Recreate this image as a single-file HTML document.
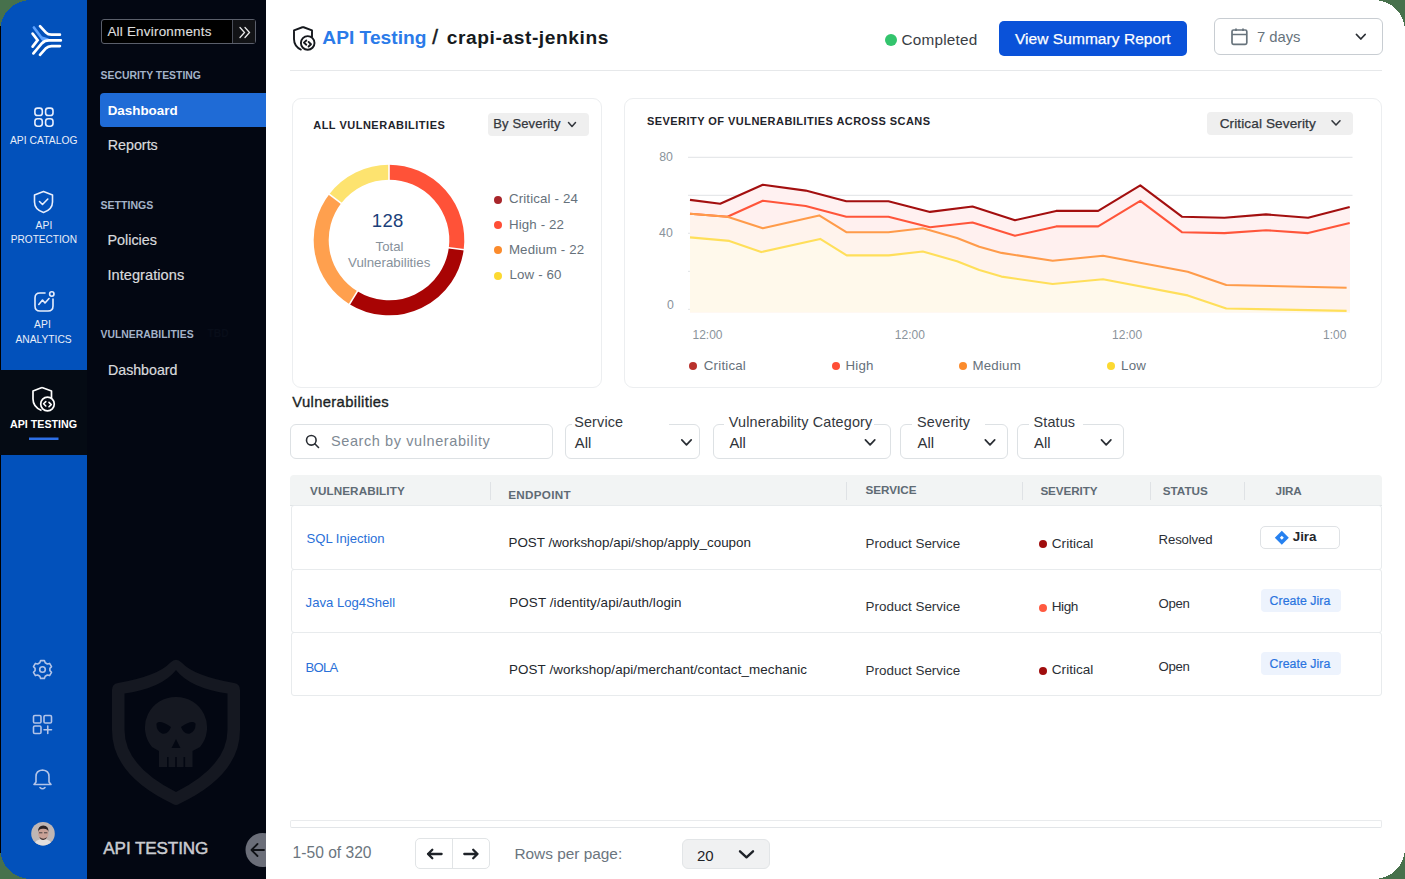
<!DOCTYPE html>
<html><head><meta charset="utf-8"><title>API Testing</title><style>
*{margin:0;padding:0;box-sizing:border-box}
html,body{width:1405px;height:879px;overflow:hidden;background:#47714c}
body{font-family:"Liberation Sans",sans-serif}
.frame{position:absolute;left:0;top:0;width:1405px;height:879px;overflow:hidden;background:#fff}
.t{position:absolute;white-space:nowrap}
.r{position:absolute}
svg{position:absolute;overflow:visible}
</style></head>
<body><div class="frame">
<div class="r" style="left:0px;top:0px;width:87px;height:879px;background:#0251bb"></div>
<div class="r" style="left:0px;top:26px;width:1px;height:827px;background:#000"></div>
<div class="r" style="left:0px;top:370px;width:87px;height:85px;background:#050b14"></div>
<div class="r" style="left:87px;top:0px;width:179px;height:879px;background:#030712"></div>
<svg style="left:0;top:0" width="87" height="80" viewBox="0 0 87 80">
<path d="M33.9 27.5 L42.6 39.3" stroke="#5da2ff" stroke-width="2.7" stroke-linecap="round"/><path d="M39.8 35.8 L49 38.6 L43.5 41.8 Z" fill="#5da2ff"/>
<g fill="none" stroke-linecap="round" stroke-width="2.7">
<path d="M32.6 33.6 L37.6 40.2 L32.6 46.6" stroke="#fff"/>
<path d="M40 26.2 L46 32.6 Q48 34.7 51.5 34.7 L59.9 34.7" stroke="#fff"/>
<path d="M33.4 53.4 L42 43.2 Q44.8 40.4 49 40.4 L60.8 40.4" stroke="#fff"/>
<path d="M40 54.8 L46 48.2 Q48 46.1 51.5 46.1 L59.9 46.1" stroke="#fff"/>
</g></svg>
<svg style="left:0;top:0" width="87" height="879" viewBox="0 0 87 879">
<g fill="none" stroke="#e8eefc" stroke-width="1.6">
<rect x="34.9" y="108.1" width="7.4" height="7.4" rx="2.6"/>
<rect x="45.6" y="108.1" width="7.4" height="7.4" rx="2.6"/>
<rect x="34.9" y="118.8" width="7.4" height="7.4" rx="2.6"/>
<rect x="45.6" y="118.8" width="7.4" height="7.4" rx="2.6"/>
<path d="M43.5 191.5 L52.5 195 L52.5 202 Q52.5 209.5 43.5 212.5 Q34.5 209.5 34.5 202 L34.5 195 Z" stroke-linejoin="round"/>
<path d="M39.5 201.5 L42.5 204.5 L47.8 199" stroke-linecap="round" stroke-linejoin="round"/>
<path d="M45 293 L40 293 Q35 293 35 298 L35 306 Q35 311 40 311 L48 311 Q53 311 53 306 L53 299" stroke-linecap="round"/>
<circle cx="51.8" cy="294" r="2.2"/>
<path d="M38.8 304.5 L42.5 300 L45 303 L49 298.5" stroke-linecap="round" stroke-linejoin="round"/>
</g>
<g fill="none" stroke="#fff" stroke-width="1.7">
<path d="M42 387.5 L51.5 391 L51.5 398" stroke-linejoin="round"/>
<path d="M42 387.5 L33 391 L33 399 Q33 407 41.5 410.5" stroke-linejoin="round"/>
<circle cx="47.5" cy="404" r="6.8"/>
<path d="M45.8 401.6 L43.6 403.8 L45.8 406 M49 402.4 L51.2 404.6 L49 406.8" stroke-width="1.6" stroke-linecap="round" stroke-linejoin="round"/>
</g>
<rect x="29" y="437.5" width="29.5" height="2.5" fill="#2d6fe6"/>
<g fill="none" stroke="#b3c4e8" stroke-width="1.6" stroke-linecap="round" stroke-linejoin="round">
<circle cx="42.5" cy="669.5" r="2.8"/>
<path d="M40.6 660.6 L44.4 660.6 L45.2 662.8 L47.3 664 L49.6 663.4 L51.5 666.7 L49.9 668.4 L49.9 670.6 L51.5 672.3 L49.6 675.6 L47.3 675 L45.2 676.2 L44.4 678.4 L40.6 678.4 L39.8 676.2 L37.7 675 L35.4 675.6 L33.5 672.3 L35.1 670.6 L35.1 668.4 L33.5 666.7 L35.4 663.4 L37.7 664 L39.8 662.8 Z"/>
<rect x="33.5" y="715.5" width="7.5" height="7.5" rx="1.3"/>
<rect x="44" y="715.5" width="7.5" height="7.5" rx="1.3"/>
<rect x="33.5" y="726" width="7.5" height="7.5" rx="1.3"/>
<path d="M47.75 726 L47.75 733.5 M44 729.75 L51.5 729.75"/>
<path d="M34 784.5 L36 782 L36 776.5 Q36 770.5 42.5 770 Q49 770.5 49 776.5 L49 782 L51 784.5 Z"/>
<path d="M40 787.5 Q42.5 790 45 787.5"/>
</g>
</svg>
<svg style="left:31px;top:822px" width="24" height="24" viewBox="0 0 24 24">
<defs><clipPath id="av"><circle cx="12" cy="11.7" r="11.8"/></clipPath></defs>
<g clip-path="url(#av)">
<rect width="24" height="24" fill="#bfb6b4"/>
<path d="M2 24 Q4 17 12 17 Q20 17 22 24 Z" fill="#e4dfdd"/>
<ellipse cx="12.3" cy="11.5" rx="5.2" ry="6.2" fill="#c9a196"/>
<path d="M7 10 Q6.8 3.5 12.3 3.5 Q17.8 3.5 17.5 10 Q16.5 6.5 12.3 6.8 Q8 6.5 7 10 Z" fill="#2b2426"/>
<path d="M8.5 15 Q12.3 18.5 16 15 Q15.5 17.5 12.3 18 Q9 17.5 8.5 15 Z" fill="#3b3031"/>
<path d="M8 10.8 h3.4 M13 10.8 h3.4" stroke="#3a3535" stroke-width="0.9"/>
</g></svg>
<div class="t" style="left:9.90px;top:136.08px;font-size:10.3px;line-height:10.3px;color:#e9eef8;letter-spacing:0.05px;">API CATALOG</div>
<div class="t" style="left:35.40px;top:220.88px;font-size:10.3px;line-height:10.3px;color:#e9eef8;letter-spacing:0.2px;">API</div>
<div class="t" style="left:10.80px;top:235.45px;font-size:10.1px;line-height:10.1px;color:#e9eef8;">PROTECTION</div>
<div class="t" style="left:33.90px;top:320.28px;font-size:10.3px;line-height:10.3px;color:#e9eef8;letter-spacing:0.2px;">API</div>
<div class="t" style="left:15.50px;top:335.12px;font-size:10.25px;line-height:10.25px;color:#e9eef8;">ANALYTICS</div>
<div class="t" style="left:10.00px;top:419.14px;font-size:10.7px;line-height:10.7px;color:#fff;font-weight:700;">API TESTING</div>
<div class="r" style="left:101px;top:19px;width:155px;height:25px;border:1.2px solid #5b5f6b;border-radius:3px;background:#000"></div>
<div class="r" style="left:232px;top:20px;width:23px;height:23px;background:#121316;border-left:1.2px solid #4b4f5a"></div>
<div class="t" style="left:107.40px;top:24.66px;font-size:13.4px;line-height:13.4px;color:#dedede;letter-spacing:0.24px;-webkit-text-stroke:0.15px #dedede;">All Environments</div>
<svg style="left:0;top:0" width="266" height="60"><g fill="none" stroke="#e8e8e8" stroke-width="1.3" stroke-linecap="round"><path d="M240 27.5 L244.5 32.5 L240 37.5 M245 27.5 L249.5 32.5 L245 37.5"/></g></svg>
<div class="t" style="left:100.50px;top:70.78px;font-size:10.42px;line-height:10.42px;color:#a3b3c9;font-weight:700;">SECURITY TESTING</div>
<div class="r" style="left:100px;top:93px;width:166px;height:34px;background:#1f6bd6;border-radius:4px 0 0 4px"></div>
<div class="t" style="left:107.70px;top:103.96px;font-size:13.4px;line-height:13.4px;color:#fff;font-weight:700;">Dashboard</div>
<div class="t" style="left:107.70px;top:138.20px;font-size:14.3px;line-height:14.3px;color:#d9dadd;-webkit-text-stroke:0.2px #d9dadd;">Reports</div>
<div class="t" style="left:100.50px;top:199.86px;font-size:10.56px;line-height:10.56px;color:#a3b3c9;font-weight:700;">SETTINGS</div>
<div class="t" style="left:107.40px;top:233.11px;font-size:14.4px;line-height:14.4px;color:#d9dadd;-webkit-text-stroke:0.2px #d9dadd;">Policies</div>
<div class="t" style="left:107.40px;top:267.94px;font-size:14.6px;line-height:14.6px;color:#d9dadd;letter-spacing:0.05px;-webkit-text-stroke:0.2px #d9dadd;">Integrations</div>
<div class="t" style="left:100.50px;top:329.98px;font-size:10.42px;line-height:10.42px;color:#a3b3c9;font-weight:700;">VULNERABILITIES</div>
<div class="t" style="left:207.50px;top:329.28px;font-size:10.3px;line-height:10.3px;color:#080d19;font-weight:700;">TBD</div>
<div class="t" style="left:108.00px;top:362.98px;font-size:14.2px;line-height:14.2px;color:#d9dadd;-webkit-text-stroke:0.2px #d9dadd;">Dashboard</div>
<svg style="left:0;top:0" width="266" height="879"><g fill="#151821">
<path fill-rule="evenodd" d="M112 690 Q112 684 118 683 Q158 676 170.5 662.5 Q176 656.8 181.5 662.5 Q194 676 234 683 Q240 684 240 690 L240 730 Q240 775 179 804 Q176 805.8 173 804 Q112 775 112 730 Z M176 670 Q162 688 124.5 693.5 L124.5 730 Q124.5 766 176 792 Q227.5 766 227.5 730 L227.5 693.5 Q190 688 176 670 Z"/>
<path fill-rule="evenodd" d="M176 697 A30.5 30.5 0 0 1 200 747 L192.5 751 L192.5 767 L159 767 L159 751 L152 747 A30.5 30.5 0 0 1 176 697 Z M156.5 723.5 Q160 719.5 171 727 Q168 735 162 733.5 Q156 731 156.5 723.5 Z M195.5 723.5 Q192 719.5 181 727 Q184 735 190 733.5 Q196 731 195.5 723.5 Z M176 739 L171.5 748 L180.5 748 Z"/>
</g>
<g fill="#030712"><rect x="167" y="757" width="1.6" height="10.5"/><rect x="175.2" y="757" width="1.6" height="10.5"/><rect x="183.5" y="757" width="1.6" height="10.5"/></g>
</svg>
<div class="t" style="left:103.30px;top:839.62px;font-size:17.1px;line-height:17.1px;color:#c9cbd0;letter-spacing:-0.1px;-webkit-text-stroke:0.5px #c9cbd0;">API TESTING</div>
<svg style="left:0;top:0;overflow:hidden" width="266" height="879"><circle cx="262.5" cy="850" r="17" fill="#6b6e79"/>
<path d="M264 850 L252 850 M257.5 844 L251.5 850 L257.5 856" stroke="#101217" stroke-width="1.8" fill="none" stroke-linecap="round" stroke-linejoin="round"/></svg>
<svg style="left:0;top:0" width="330" height="60"><g fill="none" stroke="#15181d" stroke-width="1.9" stroke-linejoin="round">
<path d="M303 27 L312 30.3 L312 37"/>
<path d="M303 27 L294 30.3 L294 39 Q294 46.5 301.5 50"/>
<circle cx="307.7" cy="42.9" r="6.8"/>
<path d="M306.3 40.5 L303.9 42.6 L306.3 44.7 M308.6 41.9 L311 44.2 L308.6 46.5" stroke-width="1.9" stroke-linecap="round"/>
</g></svg>
<div class="t" style="left:322.30px;top:28.15px;font-size:19.2px;line-height:19.2px;color:#2b7be9;font-weight:700;">API Testing</div>
<div class="t" style="left:432.30px;top:27.25px;font-size:20.5px;line-height:20.5px;color:#15181d;-webkit-text-stroke:0.5px #15181d;">/</div>
<div class="t" style="left:446.70px;top:28.25px;font-size:19.2px;line-height:19.2px;color:#161a20;font-weight:700;letter-spacing:0.58px;">crapi-ast-jenkins</div>
<div class="r" style="left:290px;top:70px;width:1092px;height:1px;background:#e6e8ea"></div>
<div class="r" style="left:885px;top:34px;width:12px;height:12px;background:#33c46d;border-radius:50%"></div>
<div class="t" style="left:901.60px;top:31.65px;font-size:15.3px;line-height:15.3px;color:#3a3e45;letter-spacing:0.2px;">Completed</div>
<div class="r" style="left:999px;top:21px;width:188px;height:35px;background:#0a52d9;border-radius:5px"></div>
<div class="t" style="left:1015.00px;top:30.78px;font-size:15.5px;line-height:15.5px;color:#fff;letter-spacing:0.05px;-webkit-text-stroke:0.25px #fff;">View Summary Report</div>
<div class="r" style="left:1214px;top:18px;width:169px;height:36.5px;border:1.2px solid #c8cdd2;border-radius:6px"></div>
<svg style="left:0;top:0" width="1405" height="60"><g fill="none" stroke="#67737c" stroke-width="1.7">
<rect x="1232" y="30" width="14.8" height="14.3" rx="1.5"/><path d="M1232 34.5 L1246.8 34.5 M1236 28.5 L1236 31 M1243 28.5 L1243 31" />
</g><path d="M1356.5 34.5 L1360.8 39 L1365.1 34.5" fill="none" stroke="#2a2e34" stroke-width="1.8" stroke-linecap="round" stroke-linejoin="round"/></svg>
<div class="t" style="left:1256.90px;top:29.67px;font-size:14.8px;line-height:14.8px;color:#67737c;">7 days</div>
<div class="r" style="left:291.5px;top:97.5px;width:310px;height:290px;border:1.2px solid #eceef0;border-radius:9px"></div>
<div class="t" style="left:313.20px;top:119.99px;font-size:11px;line-height:11px;color:#1f242b;font-weight:700;letter-spacing:0.5px;">ALL VULNERABILITIES</div>
<div class="r" style="left:488px;top:113px;width:100.5px;height:22.7px;background:#efefef;border-radius:4px"></div>
<div class="t" style="left:493.20px;top:117.40px;font-size:13px;line-height:13px;color:#33373d;letter-spacing:0.15px;-webkit-text-stroke:0.25px #33373d;">By Severity</div>
<svg style="left:0;top:0" width="1405" height="400"><path d="M568.5 122.5 L572 126.5 L575.5 122.5" fill="none" stroke="#33373d" stroke-width="1.5" stroke-linecap="round" stroke-linejoin="round"/></svg>
<svg style="left:0;top:0" width="1405" height="400"><g fill="none" stroke-width="15"><path d="M389.00 172.20 A67.8 67.8 0 0 1 456.24 248.73" stroke="#ff5238"/><path d="M456.24 248.73 A67.8 67.8 0 0 1 353.47 297.75" stroke="#a80404"/><path d="M353.47 297.75 A67.8 67.8 0 0 1 335.21 198.73" stroke="#ffa04e"/><path d="M335.21 198.73 A67.8 67.8 0 0 1 389.00 172.20" stroke="#fde36f"/></g><g stroke="#fff" stroke-width="1.6"><line x1="389.00" y1="182.00" x2="389.00" y2="162.00"/><line x1="446.52" y1="247.47" x2="466.35" y2="250.05"/><line x1="358.61" y1="289.40" x2="348.13" y2="306.43"/><line x1="342.99" y1="204.69" x2="327.12" y2="192.52"/></g></svg>
<div class="t" style="left:371.80px;top:211.84px;font-size:18.5px;line-height:18.5px;color:#1b3f7a;letter-spacing:0.3px;">128</div>
<div class="t" style="left:375.60px;top:239.53px;font-size:13.2px;line-height:13.2px;color:#87919b;">Total</div>
<div class="t" style="left:348.00px;top:256.44px;font-size:13.3px;line-height:13.3px;color:#87919b;">Vulnerabilities</div>
<div class="r" style="left:494.3px;top:195.7px;width:8px;height:8px;background:#a8262b;border-radius:50%"></div>
<div class="t" style="left:508.90px;top:192.24px;font-size:13.3px;line-height:13.3px;color:#66717b;letter-spacing:0.14px;">Critical - 24</div>
<div class="r" style="left:494.3px;top:221.07px;width:8px;height:8px;background:#ff4e36;border-radius:50%"></div>
<div class="t" style="left:508.90px;top:217.61px;font-size:13.3px;line-height:13.3px;color:#66717b;letter-spacing:0.14px;">High - 22</div>
<div class="r" style="left:494.3px;top:246.44px;width:8px;height:8px;background:#fb8b2c;border-radius:50%"></div>
<div class="t" style="left:508.90px;top:242.98px;font-size:13.3px;line-height:13.3px;color:#66717b;letter-spacing:0.14px;">Medium - 22</div>
<div class="r" style="left:494.3px;top:271.81px;width:8px;height:8px;background:#fcd931;border-radius:50%"></div>
<div class="t" style="left:509.50px;top:268.35px;font-size:13.3px;line-height:13.3px;color:#66717b;letter-spacing:0.14px;">Low - 60</div>
<div class="r" style="left:623.5px;top:97.5px;width:758px;height:290px;border:1.2px solid #eceef0;border-radius:9px"></div>
<div class="t" style="left:646.90px;top:116.19px;font-size:11px;line-height:11px;color:#1f242b;font-weight:700;letter-spacing:0.46px;">SEVERITY OF VULNERABILITIES ACROSS SCANS</div>
<div class="r" style="left:1207px;top:112px;width:145.5px;height:22.5px;background:#efefef;border-radius:4px"></div>
<div class="t" style="left:1219.70px;top:116.69px;font-size:13.6px;line-height:13.6px;color:#33373d;letter-spacing:0.1px;-webkit-text-stroke:0.25px #33373d;">Critical Severity</div>
<svg style="left:0;top:0" width="1405" height="400"><path d="M1332 120.8 L1336 125 L1340 120.8" fill="none" stroke="#33373d" stroke-width="1.6" stroke-linecap="round" stroke-linejoin="round"/></svg>
<svg style="left:0;top:0" width="1405" height="400"><line x1="688" y1="157.3" x2="1352.5" y2="157.3" stroke="#e6e8ea" stroke-width="1.2"/><line x1="688" y1="195.4" x2="1352.5" y2="195.4" stroke="#e6e8ea" stroke-width="1.2"/><line x1="688" y1="233.3" x2="700" y2="233.3" stroke="#e6e8ea" stroke-width="1.2"/><line x1="688" y1="271.4" x2="700" y2="271.4" stroke="#e6e8ea" stroke-width="1.2"/><line x1="688" y1="309.4" x2="700" y2="309.4" stroke="#e6e8ea" stroke-width="1.2"/><polygon points="690.0,199.9 720.2,203.8 762.8,184.8 805.7,190.6 846.3,201.2 888.4,201.2 930.0,211.9 972.5,206.5 1015.0,220.2 1056.2,210.9 1098.2,210.9 1140.3,185.4 1181.9,216.7 1224.4,217.7 1266.0,214.4 1308.1,217.7 1349.7,207.0 1349.7,207.0 1350.0,207.0 1350.0,312.3 690.0,312.3" fill="#fff1f1"/><polygon points="690.0,213.8 727.4,216.7 762.8,200.7 805.7,206.0 846.3,216.7 888.4,216.7 930.0,227.3 972.5,222.5 1015.0,235.7 1056.2,226.4 1098.2,226.4 1140.3,200.9 1181.9,232.2 1224.4,233.1 1266.0,230.2 1308.1,233.1 1349.7,223.1 1349.7,223.1 1350.0,223.1 1350.0,312.3 690.0,312.3" fill="#fff0ef"/><polygon points="690.0,213.8 727.4,216.7 762.8,228.3 819.2,215.4 846.3,232.2 888.4,232.2 922.8,228.3 957.0,238.0 979.3,246.7 1001.5,252.9 1052.7,260.8 1103.0,255.8 1187.7,271.8 1226.3,285.0 1346.6,287.7 1349.6,287.7 1350.0,287.7 1350.0,312.3 690.0,312.3" fill="#fff3ec"/><polygon points="690.0,237.4 729.3,240.9 761.2,252.1 820.2,238.9 846.7,255.4 888.8,255.4 922.8,251.5 957.0,261.2 979.3,269.9 1001.5,276.6 1052.7,284.0 1103.0,279.2 1187.7,295.4 1226.3,308.5 1346.6,310.9 1349.6,310.9 1350.0,310.9 1350.0,312.3 690.0,312.3" fill="#fff9eb"/><g fill="none" stroke-width="2.1" stroke-linejoin="round"><polyline points="690.0,199.9 720.2,203.8 762.8,184.8 805.7,190.6 846.3,201.2 888.4,201.2 930.0,211.9 972.5,206.5 1015.0,220.2 1056.2,210.9 1098.2,210.9 1140.3,185.4 1181.9,216.7 1224.4,217.7 1266.0,214.4 1308.1,217.7 1349.7,207.0" stroke="#a30f0f"/><polyline points="690.0,213.8 727.4,216.7 762.8,200.7 805.7,206.0 846.3,216.7 888.4,216.7 930.0,227.3 972.5,222.5 1015.0,235.7 1056.2,226.4 1098.2,226.4 1140.3,200.9 1181.9,232.2 1224.4,233.1 1266.0,230.2 1308.1,233.1 1349.7,223.1" stroke="#ff553a"/><polyline points="690.0,213.8 727.4,216.7 762.8,228.3 819.2,215.4 846.3,232.2 888.4,232.2 922.8,228.3 957.0,238.0 979.3,246.7 1001.5,252.9 1052.7,260.8 1103.0,255.8 1187.7,271.8 1226.3,285.0 1346.6,287.7" stroke="#ff9b4a"/><polyline points="690.0,237.4 729.3,240.9 761.2,252.1 820.2,238.9 846.7,255.4 888.8,255.4 922.8,251.5 957.0,261.2 979.3,269.9 1001.5,276.6 1052.7,284.0 1103.0,279.2 1187.7,295.4 1226.3,308.5 1346.6,310.9" stroke="#ffdf5a"/></g></svg>
<div class="t" style="left:659.20px;top:151.09px;font-size:12.3px;line-height:12.3px;color:#8a939b;">80</div>
<div class="t" style="left:659.10px;top:227.29px;font-size:12.3px;line-height:12.3px;color:#8a939b;">40</div>
<div class="t" style="left:667.00px;top:298.89px;font-size:12.3px;line-height:12.3px;color:#8a939b;">0</div>
<div class="t" style="left:692.50px;top:328.64px;font-size:12px;line-height:12px;color:#8a939b;">12:00</div>
<div class="t" style="left:894.80px;top:328.64px;font-size:12px;line-height:12px;color:#8a939b;">12:00</div>
<div class="t" style="left:1112.10px;top:328.64px;font-size:12px;line-height:12px;color:#8a939b;">12:00</div>
<div class="t" style="left:1323.00px;top:328.64px;font-size:12px;line-height:12px;color:#8a939b;">1:00</div>
<div class="r" style="left:689.1px;top:362.2px;width:8.2px;height:8.2px;background:#b9312c;border-radius:50%"></div>
<div class="t" style="left:703.80px;top:359.04px;font-size:13.3px;line-height:13.3px;color:#66717b;letter-spacing:0.2px;">Critical</div>
<div class="r" style="left:831.6999999999999px;top:362.2px;width:8.2px;height:8.2px;background:#ff4e36;border-radius:50%"></div>
<div class="t" style="left:845.50px;top:359.04px;font-size:13.3px;line-height:13.3px;color:#66717b;letter-spacing:0.2px;">High</div>
<div class="r" style="left:958.6999999999999px;top:362.2px;width:8.2px;height:8.2px;background:#fb8b2c;border-radius:50%"></div>
<div class="t" style="left:972.50px;top:359.04px;font-size:13.3px;line-height:13.3px;color:#66717b;letter-spacing:0.2px;">Medium</div>
<div class="r" style="left:1106.6000000000001px;top:362.2px;width:8.2px;height:8.2px;background:#fcd931;border-radius:50%"></div>
<div class="t" style="left:1121.10px;top:359.04px;font-size:13.3px;line-height:13.3px;color:#66717b;letter-spacing:0.2px;">Low</div>
<div class="t" style="left:292.30px;top:394.67px;font-size:14.8px;line-height:14.8px;color:#1b1f25;letter-spacing:0.35px;-webkit-text-stroke:0.35px #1b1f25;">Vulnerabilities</div>
<div class="r" style="left:290px;top:424.3px;width:262.5px;height:34.3px;border:1.2px solid #dde1e4;border-radius:6px"></div>
<svg style="left:0;top:0" width="1405" height="500"><g fill="none" stroke="#2a2e34" stroke-width="1.6" stroke-linecap="round"><circle cx="311.3" cy="440.3" r="4.8"/><path d="M314.8 443.8 L318.5 447.5"/></g></svg>
<div class="t" style="left:331.00px;top:433.83px;font-size:14.5px;line-height:14.5px;color:#7f8a94;letter-spacing:0.59px;">Search by vulnerability</div>
<div class="r" style="left:565.3px;top:424.3px;width:135.0px;height:34.3px;border:1.2px solid #dde1e4;border-radius:6px"></div>
<div class="r" style="left:572px;top:422px;width:96.79999999999995px;height:4px;background:#fff"></div>
<div class="t" style="left:574.20px;top:415.11px;font-size:14.4px;line-height:14.4px;color:#33373d;letter-spacing:0.15px;">Service</div>
<div class="t" style="left:574.80px;top:436.37px;font-size:14.8px;line-height:14.8px;color:#2e3238;">All</div>
<svg style="left:0;top:0" width="1405" height="500"><path d="M681.8 439.8 L686.5 444.8 L691.2 439.8" fill="none" stroke="#2a2e34" stroke-width="1.7" stroke-linecap="round" stroke-linejoin="round"/></svg>
<div class="r" style="left:712.5px;top:424.3px;width:178.5px;height:34.3px;border:1.2px solid #dde1e4;border-radius:6px"></div>
<div class="r" style="left:723.5px;top:422px;width:150.29999999999995px;height:4px;background:#fff"></div>
<div class="t" style="left:728.80px;top:415.11px;font-size:14.4px;line-height:14.4px;color:#33373d;letter-spacing:0.15px;">Vulnerability Category</div>
<div class="t" style="left:729.40px;top:436.37px;font-size:14.8px;line-height:14.8px;color:#2e3238;">All</div>
<svg style="left:0;top:0" width="1405" height="500"><path d="M865.4 439.8 L870.1 444.8 L874.8000000000001 439.8" fill="none" stroke="#2a2e34" stroke-width="1.7" stroke-linecap="round" stroke-linejoin="round"/></svg>
<div class="r" style="left:900.4px;top:424.3px;width:108.10000000000002px;height:34.3px;border:1.2px solid #dde1e4;border-radius:6px"></div>
<div class="r" style="left:912px;top:422px;width:73px;height:4px;background:#fff"></div>
<div class="t" style="left:917.00px;top:415.11px;font-size:14.4px;line-height:14.4px;color:#33373d;letter-spacing:0.15px;">Severity</div>
<div class="t" style="left:917.60px;top:436.37px;font-size:14.8px;line-height:14.8px;color:#2e3238;">All</div>
<svg style="left:0;top:0" width="1405" height="500"><path d="M985.3 439.8 L990 444.8 L994.7 439.8" fill="none" stroke="#2a2e34" stroke-width="1.7" stroke-linecap="round" stroke-linejoin="round"/></svg>
<div class="r" style="left:1017px;top:424.3px;width:107.40000000000009px;height:34.3px;border:1.2px solid #dde1e4;border-radius:6px"></div>
<div class="r" style="left:1029px;top:422px;width:53.700000000000045px;height:4px;background:#fff"></div>
<div class="t" style="left:1033.50px;top:415.11px;font-size:14.4px;line-height:14.4px;color:#33373d;letter-spacing:0.15px;">Status</div>
<div class="t" style="left:1034.10px;top:436.37px;font-size:14.8px;line-height:14.8px;color:#2e3238;">All</div>
<svg style="left:0;top:0" width="1405" height="500"><path d="M1101.5 439.8 L1106.2 444.8 L1110.9 439.8" fill="none" stroke="#2a2e34" stroke-width="1.7" stroke-linecap="round" stroke-linejoin="round"/></svg>
<div class="r" style="left:290px;top:475.2px;width:1092px;height:30.5px;background:#f2f4f4;border-bottom:1.3px solid #e0e4e6;border-radius:4px 4px 0 0"></div>
<div class="r" style="left:490.1px;top:481.5px;width:1.2px;height:18.5px;background:#dfe2e5"></div>
<div class="r" style="left:846.3px;top:481.5px;width:1.2px;height:18.5px;background:#dfe2e5"></div>
<div class="r" style="left:1021.5px;top:481.5px;width:1.2px;height:18.5px;background:#dfe2e5"></div>
<div class="r" style="left:1150.3px;top:481.5px;width:1.2px;height:18.5px;background:#dfe2e5"></div>
<div class="r" style="left:1244.3px;top:481.5px;width:1.2px;height:18.5px;background:#dfe2e5"></div>
<div class="t" style="left:310.00px;top:484.90px;font-size:11.7px;line-height:11.7px;color:#5f6b75;font-weight:700;letter-spacing:0.1px;">VULNERABILITY</div>
<div class="t" style="left:508.20px;top:488.70px;font-size:11.7px;line-height:11.7px;color:#5f6b75;font-weight:700;letter-spacing:0.3px;">ENDPOINT</div>
<div class="t" style="left:865.40px;top:484.20px;font-size:11.7px;line-height:11.7px;color:#5f6b75;font-weight:700;">SERVICE</div>
<div class="t" style="left:1040.40px;top:484.70px;font-size:11.7px;line-height:11.7px;color:#5f6b75;font-weight:700;letter-spacing:-0.1px;">SEVERITY</div>
<div class="t" style="left:1162.80px;top:484.70px;font-size:11.7px;line-height:11.7px;color:#5f6b75;font-weight:700;">STATUS</div>
<div class="t" style="left:1275.60px;top:484.70px;font-size:11.7px;line-height:11.7px;color:#5f6b75;font-weight:700;letter-spacing:-0.2px;">JIRA</div>
<div class="r" style="left:290.5px;top:505.3px;width:1091px;height:64.3px;border:1.1px solid #e8ebed;border-radius:3px"></div>
<div class="r" style="left:290.5px;top:569.2px;width:1091px;height:63.6px;border:1.1px solid #e8ebed;border-radius:3px"></div>
<div class="r" style="left:290.5px;top:632.4px;width:1091px;height:64px;border:1.1px solid #e8ebed;border-radius:3px"></div>
<div class="t" style="left:306.50px;top:531.61px;font-size:13.1px;line-height:13.1px;color:#2a70d8;">SQL Injection</div>
<div class="t" style="left:508.50px;top:535.66px;font-size:13.4px;line-height:13.4px;color:#23272d;">POST /workshop/api/shop/apply_coupon</div>
<div class="t" style="left:865.60px;top:536.76px;font-size:13.4px;line-height:13.4px;color:#2e3238;">Product Service</div>
<div class="r" style="left:1039.3px;top:540.0px;width:8px;height:8px;background:#a00d0d;border-radius:50%"></div>
<div class="t" style="left:1051.80px;top:536.79px;font-size:13.6px;line-height:13.6px;color:#2b2f36;">Critical</div>
<div class="t" style="left:1158.60px;top:533.43px;font-size:13.2px;line-height:13.2px;color:#2b2f36;letter-spacing:-0.15px;">Resolved</div>
<div class="t" style="left:305.60px;top:595.71px;font-size:13.1px;line-height:13.1px;color:#2a70d8;">Java Log4Shell</div>
<div class="t" style="left:509.30px;top:596.26px;font-size:13.4px;line-height:13.4px;color:#23272d;letter-spacing:0.1px;">POST /identity/api/auth/login</div>
<div class="t" style="left:865.60px;top:600.26px;font-size:13.4px;line-height:13.4px;color:#2e3238;">Product Service</div>
<div class="r" style="left:1039.3px;top:603.5px;width:8px;height:8px;background:#ff5a40;border-radius:50%"></div>
<div class="t" style="left:1051.80px;top:600.29px;font-size:13.6px;line-height:13.6px;color:#2b2f36;letter-spacing:-0.5px;">High</div>
<div class="t" style="left:1158.60px;top:596.93px;font-size:13.2px;line-height:13.2px;color:#2b2f36;letter-spacing:-0.3px;">Open</div>
<div class="t" style="left:305.60px;top:660.61px;font-size:13.1px;line-height:13.1px;color:#2a70d8;letter-spacing:-0.75px;">BOLA</div>
<div class="t" style="left:509.00px;top:662.86px;font-size:13.4px;line-height:13.4px;color:#23272d;letter-spacing:0.1px;">POST /workshop/api/merchant/contact_mechanic</div>
<div class="t" style="left:865.60px;top:663.76px;font-size:13.4px;line-height:13.4px;color:#2e3238;">Product Service</div>
<div class="r" style="left:1039.3px;top:666.7px;width:8px;height:8px;background:#a00d0d;border-radius:50%"></div>
<div class="t" style="left:1051.80px;top:663.49px;font-size:13.6px;line-height:13.6px;color:#2b2f36;">Critical</div>
<div class="t" style="left:1158.60px;top:660.43px;font-size:13.2px;line-height:13.2px;color:#2b2f36;letter-spacing:-0.3px;">Open</div>
<div class="r" style="left:1259.6px;top:525.5px;width:80px;height:23px;border:1.3px solid #dfe2e5;border-radius:5px;background:#fff"></div>
<svg style="left:0;top:0" width="1405" height="700"><path d="M1281.8 530.8 L1288.8 537.8 L1281.8 544.8 L1274.8 537.8 Z" fill="#2681f0"/><path d="M1281.8 535.8 L1283.8 537.8 L1281.8 539.8 L1279.8 537.8 Z" fill="#fff"/></svg>
<div class="t" style="left:1292.70px;top:530.26px;font-size:13.4px;line-height:13.4px;color:#23272d;font-weight:700;">Jira</div>
<div class="r" style="left:1260.5px;top:589px;width:80.5px;height:23px;background:#edf3fd;border-radius:4px"></div>
<div class="t" style="left:1269.60px;top:594.79px;font-size:12.3px;line-height:12.3px;color:#2a74e0;letter-spacing:0.05px;-webkit-text-stroke:0.2px #2a74e0;">Create Jira</div>
<div class="r" style="left:1260.5px;top:652.2px;width:80.5px;height:23px;background:#edf3fd;border-radius:4px"></div>
<div class="t" style="left:1269.60px;top:658.19px;font-size:12.3px;line-height:12.3px;color:#2a74e0;letter-spacing:0.05px;-webkit-text-stroke:0.2px #2a74e0;">Create Jira</div>
<div class="r" style="left:290.3px;top:820.2px;width:1092px;height:7.5px;border:1.1px solid #e9ebed;border-bottom-color:#e2e5e8;border-radius:2px"></div>
<div class="t" style="left:292.60px;top:845.49px;font-size:15.6px;line-height:15.6px;color:#6b757e;">1-50 of 320</div>
<div class="r" style="left:415.2px;top:838.3px;width:74.8px;height:30.4px;border:1.2px solid #e1e4e6;border-radius:5px"></div>
<div class="r" style="left:452.2px;top:838.3px;width:1.1px;height:30.4px;background:#e1e4e6"></div>
<div class="t" style="left:514.40px;top:845.96px;font-size:15.4px;line-height:15.4px;color:#6b757e;">Rows per page:</div>
<div class="r" style="left:682.3px;top:839px;width:87.5px;height:29.5px;background:#f0f1f2;border:1.2px solid #e2e5e7;border-radius:6px"></div>
<div class="t" style="left:697.00px;top:848.20px;font-size:15px;line-height:15px;color:#1e2228;">20</div>
<svg style="left:0;top:0" width="1405" height="879"><g fill="none" stroke="#1e2228" stroke-width="2.3" stroke-linecap="round" stroke-linejoin="round">
<path d="M441.6 854 L428 854 M432.3 849.7 L428 854 L432.3 858.3"/>
<path d="M464.3 854 L477.5 854 M473.2 849.7 L477.5 854 L473.2 858.3"/>
<path d="M740 851.3 L746.5 857.3 L753 851.3" stroke-width="2.4"/>
</g></svg>
<svg style="left:0;top:0" width="1405" height="879" shape-rendering="crispEdges"><g fill="#47714c">
<path d="M0 0 L31 0 A31 31 0 0 0 0 31 Z"/>
<path d="M1405 0 L1405 31 A31 31 0 0 0 1374 0 Z"/>
<path d="M0 879 L0 848 A31 31 0 0 0 31 879 Z"/>
<path d="M1405 879 L1374 879 A31 31 0 0 0 1405 848 Z"/>
</g></svg>
</div></body></html>
